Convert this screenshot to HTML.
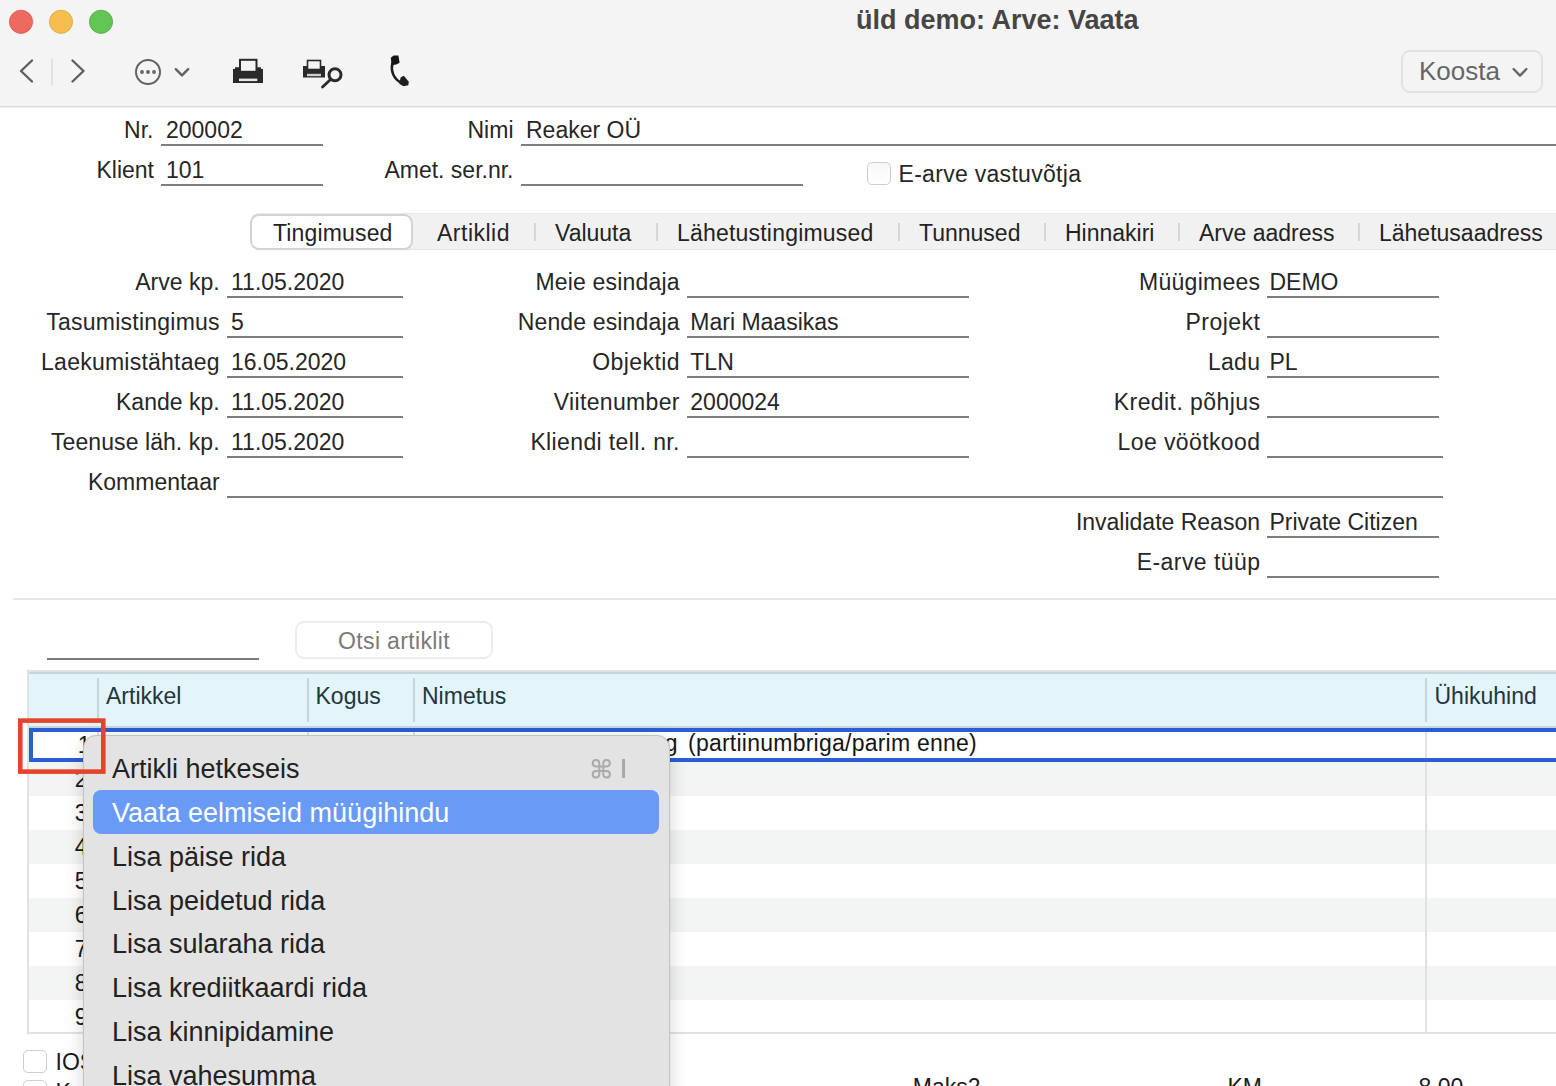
<!DOCTYPE html>
<html><head><meta charset="utf-8"><style>
html,body{margin:0;padding:0;width:1556px;height:1086px;overflow:hidden;background:#fff;}
body{position:relative;font-family:"Liberation Sans",sans-serif;}
.t{position:absolute;white-space:nowrap;line-height:1;}
.r{position:absolute;}
</style></head><body>
<div class="r" style="left:0px;top:0px;width:1556px;height:106px;background:#f4f4f4;"></div>
<div class="r" style="left:0px;top:107px;width:1556px;height:979px;background:#ffffff;"></div>
<div class="r" style="left:0px;top:106px;width:1556px;height:1px;background:#d8d8d8;"></div>
<div class="r" style="left:0px;top:107px;width:1556px;height:1px;background:#efefef;"></div>
<svg class="r" style="left:0;top:0" width="420" height="106" viewBox="0 0 420 106">
<circle cx="21" cy="21.8" r="11.6" fill="#ee6a5f" stroke="#d9534a" stroke-width="0.8"/>
<circle cx="61" cy="21.8" r="11.6" fill="#f5be4f" stroke="#dba43b" stroke-width="0.8"/>
<circle cx="101" cy="21.8" r="11.6" fill="#62c654" stroke="#4fa83f" stroke-width="0.8"/>
<polyline points="32,60.5 21,71 32,81.5" fill="none" stroke="#5e5e5e" stroke-width="2.4" stroke-linecap="round" stroke-linejoin="round"/>
<line x1="52" y1="58.5" x2="52" y2="85.5" stroke="#dedede" stroke-width="1.6"/>
<polyline points="72.5,60.5 83.5,71 72.5,81.5" fill="none" stroke="#5e5e5e" stroke-width="2.4" stroke-linecap="round" stroke-linejoin="round"/>
<circle cx="148" cy="72" r="12" fill="none" stroke="#626262" stroke-width="2"/>
<circle cx="142" cy="72" r="1.9" fill="#626262"/><circle cx="148" cy="72" r="1.9" fill="#626262"/><circle cx="154" cy="72" r="1.9" fill="#626262"/>
<polyline points="175.8,69.2 182,75.4 188.2,69.2" fill="none" stroke="#626262" stroke-width="2.4" stroke-linecap="round" stroke-linejoin="round"/>
<!-- printer -->
<rect x="240" y="59.8" width="16.5" height="12" fill="none" stroke="#2a2a2a" stroke-width="2"/>
<path d="M235,67.2 H240 V71.5 H256.5 V67.2 H261 V69 H263 V83 H233 V69 H235 Z" fill="#2a2a2a"/>
<rect x="239" y="78.6" width="18.3" height="2.5" fill="#e8e8e8"/>
<!-- printer preview -->
<rect x="307.5" y="60.5" width="13" height="9" fill="none" stroke="#2a2a2a" stroke-width="1.6"/>
<path d="M303,66 H307.5 V69.5 H320.5 V66 H325 V77.6 H303 Z" fill="#2a2a2a"/>
<rect x="307" y="73.8" width="14" height="2.4" fill="#cfcfcf"/>
<circle cx="335" cy="74.8" r="6" fill="none" stroke="#2a2a2a" stroke-width="3"/>
<line x1="330.5" y1="79.5" x2="322.5" y2="87" stroke="#2a2a2a" stroke-width="2.8" stroke-linecap="round"/>
<!-- phone -->
<path d="M392.3,63.5 C390.5,71 393.5,79 401.5,83" fill="none" stroke="#1e1e1e" stroke-width="2.5" stroke-linecap="round"/>
<path d="M390.8,57.8 L393.6,55.6 L398.4,55.6 L399.6,62.8 L396.2,64.4 L391.6,65.2 Z" fill="#151515"/>
<path d="M400.6,77.6 L403.8,75.8 L408.8,81.8 L408.3,85.2 L403.4,86.2 L399.3,83.8 Z" fill="#1e1e1e"/>
</svg>
<div class="t" style="left:856.0px;top:6.9px;font-size:27px;color:#454545;font-weight:bold;">üld demo: Arve: Vaata</div>
<div class="r" style="left:1401px;top:50px;width:138px;height:39px;border:2px solid #e2e2e2;border-radius:9px;background:#f4f4f4"></div>
<div class="t" style="left:1419.0px;top:58.0px;font-size:26px;color:#666666;font-weight:normal;">Koosta</div>
<svg class="r" style="left:1500px;top:55px" width="40" height="30" viewBox="1500 55 40 30">
<polyline points="1513.6,69 1520,75.6 1526.4,69" fill="none" stroke="#666" stroke-width="2.4" stroke-linecap="round" stroke-linejoin="round"/></svg>
<div class="t" style="right:1402.50px;top:118.5px;font-size:23px;color:#262626;font-weight:normal;text-align:right;">Nr.</div>
<div class="t" style="left:166.0px;top:118.5px;font-size:23px;color:#262626;font-weight:normal;">200002</div>
<div class="r" style="left:161px;top:144px;width:162px;height:2px;background:#7d7d7d;"></div>
<div class="t" style="right:1042.50px;top:118.5px;font-size:23px;color:#262626;font-weight:normal;text-align:right;">Nimi</div>
<div class="t" style="left:526.0px;top:118.5px;font-size:23px;color:#262626;font-weight:normal;">Reaker OÜ</div>
<div class="r" style="left:521px;top:144px;width:1035px;height:2px;background:#7d7d7d;"></div>
<div class="t" style="right:1402.00px;top:158.5px;font-size:23px;color:#262626;font-weight:normal;text-align:right;">Klient</div>
<div class="t" style="left:166.0px;top:158.5px;font-size:23px;color:#262626;font-weight:normal;">101</div>
<div class="r" style="left:161px;top:184px;width:162px;height:2px;background:#7d7d7d;"></div>
<div class="t" style="right:1042.50px;top:158.5px;font-size:23px;color:#262626;font-weight:normal;text-align:right;">Amet. ser.nr.</div>
<div class="r" style="left:521px;top:184px;width:282px;height:2px;background:#7d7d7d;"></div>
<div class="r" style="left:867px;top:162px;width:22px;height:21px;border:1px solid #cdcdcd;border-radius:5px;background:linear-gradient(#f7f7f7,#ffffff)"></div>
<div class="t" style="left:898.5px;top:162.7px;font-size:23px;color:#262626;font-weight:normal;letter-spacing:0.3px">E-arve vastuvõtja</div>
<div class="r" style="left:251px;top:213px;width:1305px;height:37px;background:#f1f1f1;border-radius:8px 0 0 8px;box-shadow:inset 0 1px 0 #e8e8e8, inset 0 -1px 0 #e4e4e4"></div>
<div class="r" style="left:252px;top:216px;width:159px;height:32px;background:#ffffff;border-radius:7px;box-shadow:0 0 0 2px #d3d3d3, 0 1px 1px 1px rgba(0,0,0,0.06)"></div>
<div class="t" style="left:273.0px;top:221.8px;font-size:23px;color:#232323;font-weight:normal;letter-spacing:0.15px">Tingimused</div>
<div class="t" style="left:437.0px;top:221.8px;font-size:23px;color:#232323;font-weight:normal;letter-spacing:0.5px">Artiklid</div>
<div class="t" style="left:555.0px;top:221.8px;font-size:23px;color:#232323;font-weight:normal;letter-spacing:0px">Valuuta</div>
<div class="t" style="left:677.0px;top:221.8px;font-size:23px;color:#232323;font-weight:normal;letter-spacing:0.2px">Lähetustingimused</div>
<div class="t" style="left:919.0px;top:221.8px;font-size:23px;color:#232323;font-weight:normal;letter-spacing:0px">Tunnused</div>
<div class="t" style="left:1065.0px;top:221.8px;font-size:23px;color:#232323;font-weight:normal;letter-spacing:0px">Hinnakiri</div>
<div class="t" style="left:1199.0px;top:221.8px;font-size:23px;color:#232323;font-weight:normal;letter-spacing:0px">Arve aadress</div>
<div class="t" style="left:1379.0px;top:221.8px;font-size:23px;color:#232323;font-weight:normal;letter-spacing:0px">Lähetusaadress</div>
<div class="r" style="left:534px;top:223px;width:2px;height:18px;background:#d6d6d6;"></div>
<div class="r" style="left:656px;top:223px;width:2px;height:18px;background:#d6d6d6;"></div>
<div class="r" style="left:898px;top:223px;width:2px;height:18px;background:#d6d6d6;"></div>
<div class="r" style="left:1044px;top:223px;width:2px;height:18px;background:#d6d6d6;"></div>
<div class="r" style="left:1178px;top:223px;width:2px;height:18px;background:#d6d6d6;"></div>
<div class="r" style="left:1358px;top:223px;width:2px;height:18px;background:#d6d6d6;"></div>
<div class="t" style="right:1336.40px;top:271.0px;font-size:23px;color:#262626;font-weight:normal;text-align:right;">Arve kp.</div>
<div class="t" style="left:231.0px;top:271.0px;font-size:23px;color:#262626;font-weight:normal;">11.05.2020</div>
<div class="r" style="left:227px;top:296px;width:176px;height:2px;background:#7d7d7d;"></div>
<div class="t" style="right:1336.16px;top:311.0px;font-size:23px;color:#262626;font-weight:normal;text-align:right;letter-spacing:0.24px;">Tasumistingimus</div>
<div class="t" style="left:231.0px;top:311.0px;font-size:23px;color:#262626;font-weight:normal;">5</div>
<div class="r" style="left:227px;top:336px;width:176px;height:2px;background:#7d7d7d;"></div>
<div class="t" style="right:1336.16px;top:351.0px;font-size:23px;color:#262626;font-weight:normal;text-align:right;letter-spacing:0.24px;">Laekumistähtaeg</div>
<div class="t" style="left:231.0px;top:351.0px;font-size:23px;color:#262626;font-weight:normal;">16.05.2020</div>
<div class="r" style="left:227px;top:376px;width:176px;height:2px;background:#7d7d7d;"></div>
<div class="t" style="right:1336.40px;top:391.0px;font-size:23px;color:#262626;font-weight:normal;text-align:right;">Kande kp.</div>
<div class="t" style="left:231.0px;top:391.0px;font-size:23px;color:#262626;font-weight:normal;">11.05.2020</div>
<div class="r" style="left:227px;top:416px;width:176px;height:2px;background:#7d7d7d;"></div>
<div class="t" style="right:1336.33px;top:431.0px;font-size:23px;color:#262626;font-weight:normal;text-align:right;letter-spacing:0.07px;">Teenuse läh. kp.</div>
<div class="t" style="left:231.0px;top:431.0px;font-size:23px;color:#262626;font-weight:normal;">11.05.2020</div>
<div class="r" style="left:227px;top:456px;width:176px;height:2px;background:#7d7d7d;"></div>
<div class="t" style="right:1336.40px;top:471.0px;font-size:23px;color:#262626;font-weight:normal;text-align:right;">Kommentaar</div>
<div class="r" style="left:227px;top:496px;width:1216px;height:2px;background:#7d7d7d;"></div>
<div class="t" style="right:876.33px;top:271.0px;font-size:23px;color:#262626;font-weight:normal;text-align:right;letter-spacing:0.17px;">Meie esindaja</div>
<div class="r" style="left:687px;top:296px;width:282px;height:2px;background:#7d7d7d;"></div>
<div class="t" style="right:876.35px;top:311.0px;font-size:23px;color:#262626;font-weight:normal;text-align:right;letter-spacing:0.15px;">Nende esindaja</div>
<div class="t" style="left:690.3px;top:311.0px;font-size:23px;color:#262626;font-weight:normal;">Mari Maasikas</div>
<div class="r" style="left:687px;top:336px;width:282px;height:2px;background:#7d7d7d;"></div>
<div class="t" style="right:876.10px;top:351.0px;font-size:23px;color:#262626;font-weight:normal;text-align:right;letter-spacing:0.4px;">Objektid</div>
<div class="t" style="left:690.3px;top:351.0px;font-size:23px;color:#262626;font-weight:normal;">TLN</div>
<div class="r" style="left:687px;top:376px;width:282px;height:2px;background:#7d7d7d;"></div>
<div class="t" style="right:876.16px;top:391.0px;font-size:23px;color:#262626;font-weight:normal;text-align:right;letter-spacing:0.34px;">Viitenumber</div>
<div class="t" style="left:690.3px;top:391.0px;font-size:23px;color:#262626;font-weight:normal;">2000024</div>
<div class="r" style="left:687px;top:416px;width:282px;height:2px;background:#7d7d7d;"></div>
<div class="t" style="right:876.13px;top:431.0px;font-size:23px;color:#262626;font-weight:normal;text-align:right;letter-spacing:0.37px;">Kliendi tell. nr.</div>
<div class="r" style="left:687px;top:456px;width:282px;height:2px;background:#7d7d7d;"></div>
<div class="t" style="right:295.75px;top:271.0px;font-size:23px;color:#262626;font-weight:normal;text-align:right;letter-spacing:0.25px;">Müügimees</div>
<div class="t" style="left:1269.5px;top:271.0px;font-size:23px;color:#262626;font-weight:normal;">DEMO</div>
<div class="r" style="left:1267px;top:296px;width:172px;height:2px;background:#7d7d7d;"></div>
<div class="t" style="right:295.50px;top:311.0px;font-size:23px;color:#262626;font-weight:normal;text-align:right;letter-spacing:0.5px;">Projekt</div>
<div class="r" style="left:1267px;top:336px;width:172px;height:2px;background:#7d7d7d;"></div>
<div class="t" style="right:295.70px;top:351.0px;font-size:23px;color:#262626;font-weight:normal;text-align:right;letter-spacing:0.3px;">Ladu</div>
<div class="t" style="left:1269.5px;top:351.0px;font-size:23px;color:#262626;font-weight:normal;">PL</div>
<div class="r" style="left:1267px;top:376px;width:172px;height:2px;background:#7d7d7d;"></div>
<div class="t" style="right:295.57px;top:391.0px;font-size:23px;color:#262626;font-weight:normal;text-align:right;letter-spacing:0.43px;">Kredit. põhjus</div>
<div class="r" style="left:1267px;top:416px;width:172px;height:2px;background:#7d7d7d;"></div>
<div class="t" style="right:295.61px;top:431.0px;font-size:23px;color:#262626;font-weight:normal;text-align:right;letter-spacing:0.39px;">Loe vöötkood</div>
<div class="r" style="left:1267px;top:456px;width:176px;height:2px;background:#7d7d7d;"></div>
<div class="t" style="right:296.00px;top:511.0px;font-size:23px;color:#262626;font-weight:normal;text-align:right;">Invalidate Reason</div>
<div class="t" style="left:1269.5px;top:511.0px;font-size:23px;color:#262626;font-weight:normal;">Private Citizen</div>
<div class="r" style="left:1267px;top:536px;width:172px;height:2px;background:#7d7d7d;"></div>
<div class="t" style="right:295.56px;top:551.0px;font-size:23px;color:#262626;font-weight:normal;text-align:right;letter-spacing:0.44px;">E-arve tüüp</div>
<div class="r" style="left:1267px;top:576px;width:172px;height:2px;background:#7d7d7d;"></div>
<div class="r" style="left:13px;top:598px;width:1543px;height:2px;background:#e6e6e6;"></div>
<div class="r" style="left:47px;top:658px;width:212px;height:2px;background:#7a7a7a;"></div>
<div class="r" style="left:295px;top:621px;width:194px;height:34px;border:2px solid #ececec;border-radius:9px;background:#ffffff"></div>
<div class="t" style="left:-6.0px;width:800px;top:629.5px;font-size:23px;color:#7a7a7a;font-weight:normal;text-align:center;letter-spacing:0.35px">Otsi artiklit</div>
<div class="r" style="left:27px;top:670px;width:1529px;height:364px;background:#e2e2e2;"></div>
<div class="r" style="left:29px;top:672px;width:1527px;height:360px;background:#ffffff;"></div>
<div class="r" style="left:29px;top:672px;width:1527px;height:2px;background:#c4d6dd;"></div>
<div class="r" style="left:29px;top:674px;width:1527px;height:52px;background:#e3f4fb;"></div>
<div class="r" style="left:29px;top:726px;width:1527px;height:2px;background:#c8d6db;"></div>
<div class="r" style="left:97px;top:678px;width:2px;height:44px;background:#c6d5db;"></div>
<div class="r" style="left:307px;top:678px;width:2px;height:44px;background:#c6d5db;"></div>
<div class="r" style="left:413px;top:678px;width:2px;height:44px;background:#c6d5db;"></div>
<div class="r" style="left:1425px;top:678px;width:2px;height:44px;background:#c6d5db;"></div>
<div class="t" style="left:106.0px;top:684.5px;font-size:23px;color:#22363e;font-weight:normal;">Artikkel</div>
<div class="t" style="left:315.5px;top:684.5px;font-size:23px;color:#22363e;font-weight:normal;">Kogus</div>
<div class="t" style="left:422.0px;top:684.5px;font-size:23px;color:#22363e;font-weight:normal;">Nimetus</div>
<div class="t" style="left:1434.5px;top:684.5px;font-size:23px;color:#22363e;font-weight:normal;">Ühikuhind</div>
<div class="r" style="left:29px;top:728px;width:1527px;height:34px;background:#ffffff;"></div>
<div class="r" style="left:29px;top:762px;width:1527px;height:34px;background:#f3f4f4;"></div>
<div class="r" style="left:29px;top:796px;width:1527px;height:34px;background:#ffffff;"></div>
<div class="r" style="left:29px;top:830px;width:1527px;height:34px;background:#f3f4f4;"></div>
<div class="r" style="left:29px;top:864px;width:1527px;height:34px;background:#ffffff;"></div>
<div class="r" style="left:29px;top:898px;width:1527px;height:34px;background:#f3f4f4;"></div>
<div class="r" style="left:29px;top:932px;width:1527px;height:34px;background:#ffffff;"></div>
<div class="r" style="left:29px;top:966px;width:1527px;height:34px;background:#f3f4f4;"></div>
<div class="r" style="left:29px;top:1000px;width:1527px;height:32px;background:#ffffff;"></div>
<div class="r" style="left:97px;top:728px;width:2px;height:304px;background:#e1e1e1;"></div>
<div class="r" style="left:307px;top:728px;width:2px;height:304px;background:#e1e1e1;"></div>
<div class="r" style="left:413px;top:728px;width:2px;height:304px;background:#e1e1e1;"></div>
<div class="r" style="left:1425px;top:728px;width:2px;height:304px;background:#e1e1e1;"></div>
<div class="r" style="left:29px;top:728px;width:1527px;height:4px;background:#2b5dd5;"></div>
<div class="r" style="left:29px;top:758px;width:1527px;height:4px;background:#2b5dd5;"></div>
<div class="r" style="left:29px;top:728px;width:4px;height:34px;background:#2b5dd5;"></div>
<div class="t" style="right:1465.50px;top:734.0px;font-size:23px;color:#1a1a1a;font-weight:normal;text-align:right;">1</div>
<div class="t" style="right:1468.50px;top:768.0px;font-size:23px;color:#1a1a1a;font-weight:normal;text-align:right;">2</div>
<div class="t" style="right:1468.50px;top:802.0px;font-size:23px;color:#1a1a1a;font-weight:normal;text-align:right;">3</div>
<div class="t" style="right:1468.50px;top:836.0px;font-size:23px;color:#1a1a1a;font-weight:normal;text-align:right;">4</div>
<div class="t" style="right:1468.50px;top:870.0px;font-size:23px;color:#1a1a1a;font-weight:normal;text-align:right;">5</div>
<div class="t" style="right:1468.50px;top:904.0px;font-size:23px;color:#1a1a1a;font-weight:normal;text-align:right;">6</div>
<div class="t" style="right:1468.50px;top:938.0px;font-size:23px;color:#1a1a1a;font-weight:normal;text-align:right;">7</div>
<div class="t" style="right:1468.50px;top:972.0px;font-size:23px;color:#1a1a1a;font-weight:normal;text-align:right;">8</div>
<div class="t" style="right:1468.50px;top:1006.0px;font-size:23px;color:#1a1a1a;font-weight:normal;text-align:right;">9</div>
<div class="t" style="right:878.50px;top:732.2px;font-size:23px;color:#151515;font-weight:normal;text-align:right;">g</div>
<div class="t" style="left:688.0px;top:732.2px;font-size:23px;color:#151515;font-weight:normal;letter-spacing:0.24px">(partiinumbriga/parim enne)</div>
<div class="r" style="left:23px;top:1050px;width:22px;height:21px;border:1px solid #cdcdcd;border-radius:5px;background:#fff"></div>
<div class="r" style="left:23px;top:1080px;width:22px;height:21px;border:1px solid #cdcdcd;border-radius:5px;background:#fff"></div>
<div class="t" style="left:55.5px;top:1051.0px;font-size:23px;color:#1a1a1a;font-weight:normal;">IOS</div>
<div class="t" style="left:55.5px;top:1081.0px;font-size:23px;color:#1a1a1a;font-weight:normal;">Kasum</div>
<div class="t" style="left:912.8px;top:1076.0px;font-size:23px;color:#1a1a1a;font-weight:normal;">Maks2</div>
<div class="t" style="left:1227.5px;top:1076.0px;font-size:23px;color:#1a1a1a;font-weight:normal;">KM</div>
<div class="t" style="left:1418.5px;top:1076.0px;font-size:23px;color:#1a1a1a;font-weight:normal;">8.00</div>
<div class="r" style="left:82.5px;top:735px;width:587px;height:420px;background:#e3e3e3;border:1px solid #c3c3c3;box-sizing:border-box;border-radius:13px;box-shadow:0 5px 18px rgba(0,0,0,0.17), 0 0 1px rgba(0,0,0,0.12)"></div>
<div class="r" style="left:93px;top:790px;width:566px;height:44px;background:#699bf6;border-radius:8px"></div>
<div class="t" style="left:112.0px;top:756.0px;font-size:27px;color:#222222;font-weight:normal;">Artikli hetkeseis</div>
<div class="t" style="left:112.0px;top:799.9px;font-size:27px;color:#ffffff;font-weight:normal;">Vaata eelmiseid müügihindu</div>
<div class="t" style="left:112.0px;top:843.7px;font-size:27px;color:#222222;font-weight:normal;">Lisa päise rida</div>
<div class="t" style="left:112.0px;top:887.6px;font-size:27px;color:#222222;font-weight:normal;">Lisa peidetud rida</div>
<div class="t" style="left:112.0px;top:931.4px;font-size:27px;color:#222222;font-weight:normal;">Lisa sularaha rida</div>
<div class="t" style="left:112.0px;top:975.3px;font-size:27px;color:#222222;font-weight:normal;">Lisa krediitkaardi rida</div>
<div class="t" style="left:112.0px;top:1019.1px;font-size:27px;color:#222222;font-weight:normal;">Lisa kinnipidamine</div>
<div class="t" style="left:112.0px;top:1063.0px;font-size:27px;color:#222222;font-weight:normal;">Lisa vahesumma</div>
<svg class="r" style="left:591px;top:758px" width="22" height="22" viewBox="0 0 22 22"><path d="M8,8 V4.5 A3.3,3.3 0 1 0 4.5,8 H15.5 A3.3,3.3 0 1 0 12,4.5 V16 A3.3,3.3 0 1 0 15.5,12.5 H4.5 A3.3,3.3 0 1 0 8,16 Z" transform="translate(0.3,0.5)" fill="none" stroke="#aaaaaa" stroke-width="2"/></svg>
<div class="r" style="left:622px;top:759px;width:3px;height:19px;background:#a9a9a9;"></div>
<svg class="r" style="left:0;top:700px" width="120" height="90" viewBox="0 700 120 90"><rect x="20.3" y="720.6" width="83" height="51" fill="none" stroke="#e6432b" stroke-width="4.6"/></svg>
</body></html>
